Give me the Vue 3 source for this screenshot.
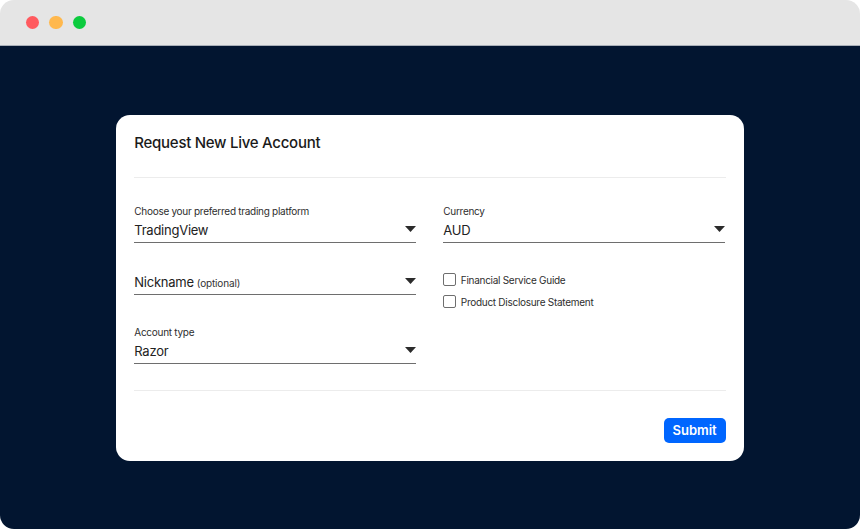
<script setup>
const leftFields = [
  { label: 'Choose your preferred trading platform', value: 'TradingView' },
  { value: 'Nickname', hint: '(optional)' },
  { label: 'Account type', value: 'Razor' }
]
const documents = ['Financial Service Guide', 'Product Disclosure Statement']
</script>

<template>
  <div class="window">
    <header class="titlebar">
      <span class="dot dot--red"></span>
      <span class="dot dot--yellow"></span>
      <span class="dot dot--green"></span>
    </header>
    <main class="stage">
      <section class="card">
        <h1 class="card-title">Request New Live Account</h1>
        <div class="form">
          <div class="col">
            <div v-for="f in leftFields" :key="f.value" class="field">
              <div v-if="f.label" class="field-label">{{ f.label }}</div>
              <div class="select">
                <span class="select-value">{{ f.value }}<small v-if="f.hint" class="select-hint">{{ f.hint }}</small></span>
                <svg class="caret" width="11" height="6" viewBox="0 0 11 6" aria-hidden="true"><path d="M0 0h11L5.5 6z" fill="#2b2b2b" /></svg>
              </div>
            </div>
          </div>
          <div class="col">
            <div class="field">
              <div class="field-label">Currency</div>
              <div class="select">
                <span class="select-value">AUD</span>
                <svg class="caret" width="11" height="6" viewBox="0 0 11 6" aria-hidden="true"><path d="M0 0h11L5.5 6z" fill="#2b2b2b" /></svg>
              </div>
            </div>
            <div class="docs">
              <label v-for="d in documents" :key="d" class="check">
                <span class="check-box"></span>
                <span>{{ d }}</span>
              </label>
            </div>
          </div>
        </div>
        <footer class="card-footer">
          <button type="button" class="submit">Submit</button>
        </footer>
      </section>
    </main>
  </div>
</template>

<style scoped>
.window {
  width: 860px;
  height: 529px;
  display: flex;
  flex-direction: column;
  border-radius: 14px;
  overflow: hidden;
  font-family: Inter, "Liberation Sans", sans-serif;
}
.titlebar {
  height: 45px;
  flex-shrink: 0;
  display: flex;
  align-items: center;
  gap: 10.2px;
  padding-left: 26px;
  background: #e5e5e5;
  border-bottom: 1px solid #a9afb8;
}
.dot {
  width: 13.3px;
  height: 13.3px;
  border-radius: 50%;
}
.dot--red { background: #ff5a5f; }
.dot--yellow { background: #ffb84d; }
.dot--green { background: #0ccb3e; }

.stage {
  flex: 1;
  background: #021530;
  padding: 69px 0 0 116px;
}
.card {
  width: 627.6px;
  height: 346px;
  box-sizing: border-box;
  padding: 0 18px 0 18.3px;
  background: #fff;
  border-radius: 14px;
  display: flex;
  flex-direction: column;
}
.card-title {
  margin: 0;
  height: 63px;
  box-sizing: border-box;
  padding-top: 18px;
  border-bottom: 1px solid #ececec;
  font-size: 15px;
  line-height: 19px;
  font-weight: 500;
  letter-spacing: -0.27px;
  color: #1a1a1a;
}
.form {
  display: grid;
  grid-template-columns: 282px 282px;
  column-gap: 27px;
  height: 213px;
  box-sizing: border-box;
  padding-top: 27px;
  border-bottom: 1px solid #ececec;
}
.col {
  display: flex;
  flex-direction: column;
}
.field:nth-child(2) {
  margin-top: 27px;
}
.field:nth-child(3) {
  margin-top: 31px;
}
.field-label {
  font-size: 10px;
  line-height: 13px;
  letter-spacing: -0.28px;
  color: #2e2e2e;
}
.select {
  display: flex;
  align-items: center;
  justify-content: space-between;
  height: 22px;
  box-sizing: border-box;
  margin-top: 3px;
  padding-bottom: 3px;
  border-bottom: 1px solid #6e6e6e;
}
.select-value {
  font-size: 13px;
  line-height: 18px;
  letter-spacing: -0.25px;
  color: #222;
}
.select-hint {
  margin-left: 3px;
  font-size: 10px;
  letter-spacing: -0.15px;
  color: #333;
}
.caret {
  margin-top: -3px;
}
.docs {
  display: flex;
  flex-direction: column;
  gap: 9px;
  margin-top: 30px;
}
.check {
  display: flex;
  align-items: center;
  gap: 4.5px;
  height: 13px;
  font-size: 10px;
  letter-spacing: -0.28px;
  color: #2e2e2e;
}
.check-box {
  width: 11px;
  height: 11px;
  border: 1px solid #6e6e6e;
  border-radius: 2px;
  flex-shrink: 0;
}
.card-footer {
  display: flex;
  justify-content: flex-end;
  padding-top: 27px;
}
.submit {
  width: 62px;
  height: 25px;
  padding: 0 0 1px;
  border: none;
  border-radius: 5px;
  background: #0066ff;
  color: #fff;
  font-family: inherit;
  font-size: 13px;
  font-weight: 600;
  cursor: pointer;
}
</style>

<style>
html, body {
  background: #fff;
}
</style>
